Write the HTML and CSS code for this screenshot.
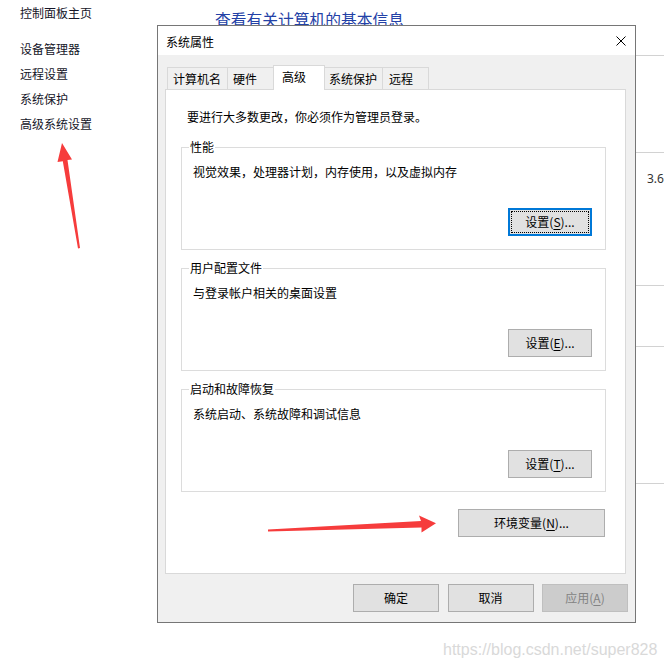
FILE: index.html
```html
<!DOCTYPE html>
<html lang="zh-CN">
<head>
<meta charset="utf-8">
<title>系统属性</title>
<link rel="stylesheet" href="styles.css">
</head>
<body>
<div class="page">
  <div class="cp">
    <nav class="sidebar">
      <div class="side-home">控制面板主页</div>
      <ul class="side-links">
        <li>设备管理器</li>
        <li>远程设置</li>
        <li>系统保护</li>
        <li>高级系统设置</li>
      </ul>
    </nav>
    <main class="main">
      <div class="row row-head"><h1 class="heading">查看有关计算机的基本信息</h1></div>
      <div class="row row-a"></div>
      <div class="row row-b"><span class="cell-val">3.6</span></div>
      <div class="row row-c"></div>
      <div class="row row-d"></div>
    </main>
  </div>

  <section class="dialog">
    <header class="titlebar">
      <div class="title">系统属性</div>
      <svg class="close" width="10" height="10" viewBox="0 0 10 10"><path d="M0.5 0.5 L9.5 9.5 M9.5 0.5 L0.5 9.5" stroke="#000" stroke-width="1" fill="none"/></svg>
    </header>
    <div class="dialog-body">
      <div class="tabs">
        <div class="tab tab-1">计算机名</div>
        <div class="tab tab-2">硬件</div>
        <div class="tab tab-active">高级</div>
        <div class="tab tab-4">系统保护</div>
        <div class="tab tab-5">远程</div>
      </div>
      <div class="panel">
        <p class="intro">要进行大多数更改，你必须作为管理员登录。</p>
        <div class="group">
          <span class="group-label">性能</span>
          <p class="group-text">视觉效果，处理器计划，内存使用，以及虚拟内存</p>
          <button class="btn btn-set btn-focus">设置(<u>S</u>)...</button>
        </div>
        <div class="group">
          <span class="group-label">用户配置文件</span>
          <p class="group-text">与登录帐户相关的桌面设置</p>
          <button class="btn btn-set">设置(<u>E</u>)...</button>
        </div>
        <div class="group">
          <span class="group-label">启动和故障恢复</span>
          <p class="group-text">系统启动、系统故障和调试信息</p>
          <button class="btn btn-set">设置(<u>T</u>)...</button>
        </div>
        <button class="btn btn-env">环境变量(<u>N</u>)...</button>
      </div>
      <div class="actions">
        <button class="btn btn-act">确定</button>
        <button class="btn btn-act">取消</button>
        <button class="btn btn-act btn-disabled">应用(<u>A</u>)</button>
      </div>
    </div>
  </section>

  <svg class="annot" width="664" height="667" viewBox="0 0 664 667">
    <polygon fill="#f63c3c" points="62,143 72,159.5 67.5,160 80,248 78,248.5 62.8,161.2 57.5,162"/>
    <polygon fill="#f63c3c" points="268,529.4 421,521 419,515.5 436,523.3 421.5,532.5 421.5,527.6 268,531.4"/>
  </svg>

  <div class="watermark">https://blog.csdn.net/super828</div>
</div>
</body>
</html>
```

FILE: styles.css
```css
html, body {
  margin: 0;
  padding: 0;
  background: #fff;
}

body {
  width: 664px;
  height: 667px;
  overflow: hidden;
  font-family: "Noto Sans CJK SC", "Noto Sans", sans-serif;
  font-size: 12px;
  color: #000;
}

.page {
  position: relative;
  width: 664px;
  height: 667px;
}

/* ---------- control panel behind ---------- */
.cp {
  display: flex;
  height: 100%;
}

.sidebar {
  width: 195px;
  padding-left: 20px;
  flex: none;
  color: #151528;
}

.side-home {
  line-height: 25px;
}

.side-links {
  list-style: none;
  margin: 11px 0 0;
  padding: 0;
}

.side-links li {
  line-height: 25px;
}

.main {
  flex: 1;
  min-width: 0;
}

.row {
  box-sizing: border-box;
  border-bottom: 1px solid #d2d2d2;
}

.row-head {
  height: 56px;
  padding-top: 10px;
}

.heading {
  margin: 0;
  font-size: 15.75px;
  line-height: 20px;
  font-weight: normal;
  color: #2341a6;
}

.row-a { height: 97px; }

.row-b {
  height: 133px;
  padding: 16px 0 0 432px;
}

.cell-val {
  font-family: "Noto Sans", "Liberation Sans", sans-serif;
  font-size: 12px;
  line-height: 16px;
  color: #333;
}

.row-c { height: 61px; }
.row-d { height: 137px; }

/* ---------- dialog ---------- */
.dialog {
  position: absolute;
  left: 157px;
  top: 25px;
  width: 479px;
  height: 598px;
  box-sizing: border-box;
  border: 1px solid #767676;
  background: #f0f0f0;
  display: flex;
  flex-direction: column;
}

.titlebar {
  height: 29px;
  flex: none;
  background: #fff;
  display: flex;
  justify-content: space-between;
  align-items: flex-start;
}

.title {
  padding: 8px 0 0 8px;
  line-height: 16px;
}

.close {
  margin: 10px 9px 0 0;
}

.dialog-body {
  flex: 1;
  padding: 10px 9px 0 7px;
  display: flex;
  flex-direction: column;
}

.tabs {
  display: flex;
  align-items: flex-start;
  height: 25px;
  margin: 0 0 -1px 2px;
}

.tab {
  box-sizing: border-box;
  height: 22px;
  margin-top: 2px;
  margin-left: -1px;
  padding: 3px 0 0 5px;
  line-height: 16px;
  border: 1px solid #d9d9d9;
  border-bottom: none;
  background: #f0f0f0;
  white-space: nowrap;
}

.tab-1 { width: 61px; margin-left: 0; }
.tab-2 { width: 47px; }
.tab-4 { width: 59px; padding-left: 4px; }
.tab-5 { width: 47px; padding-left: 6px; }

.tab-active {
  position: relative;
  z-index: 1;
  width: 52px;
  height: 25px;
  margin-top: 0;
  padding-left: 8px;
  background: #fff;
}

.panel {
  box-sizing: border-box;
  height: 485px;
  flex: none;
  border: 1px solid #d9d9d9;
  background: #fff;
  padding: 19px 19px 0 15px;
  display: flex;
  flex-direction: column;
}

.intro {
  margin: 0 0 22px;
  padding-left: 6px;
  line-height: 16px;
}

.group {
  position: relative;
  box-sizing: border-box;
  height: 103px;
  flex: none;
  border: 1px solid #dcdcdc;
  padding: 16px 13px 13px 11px;
  display: flex;
  flex-direction: column;
}

.group + .group {
  margin-top: 18px;
}

.group-label {
  position: absolute;
  top: -9px;
  left: 7px;
  padding: 0 1px;
  line-height: 16px;
  background: #fff;
}

.group-text {
  margin: 0;
  line-height: 16px;
}

.btn {
  box-sizing: border-box;
  height: 28px;
  padding: 0;
  border: 1px solid #adadad;
  background: #e1e1e1;
  font-family: inherit;
  font-size: 12px;
  line-height: 16px;
  color: #000;
}

.btn u {
  text-underline-offset: 2px;
}

.btn-set {
  width: 84px;
  margin-top: auto;
  align-self: flex-end;
}

.btn-focus {
  border-color: #0078d7;
  box-shadow: inset 0 0 0 1px #0078d7;
  outline: 1px dotted #000;
  outline-offset: -4px;
}

.btn-env {
  width: 147px;
  margin: 17px 1px 0 0;
  align-self: flex-end;
}

.actions {
  display: flex;
  justify-content: flex-end;
  gap: 8.5px;
  margin: 10px -2px 0 0;
}

.btn-act {
  width: 86px;
}

.btn-disabled {
  background: #cccccc;
  border-color: #bfbfbf;
  color: #838383;
}

/* ---------- annotations ---------- */
.annot {
  position: absolute;
  left: 0;
  top: 0;
  pointer-events: none;
}

.watermark {
  position: absolute;
  left: 443px;
  top: 641px;
  font-family: "Liberation Sans", Arial, sans-serif;
  font-size: 16px;
  line-height: 18px;
  color: #d9d9d9;
  white-space: nowrap;
}
```
